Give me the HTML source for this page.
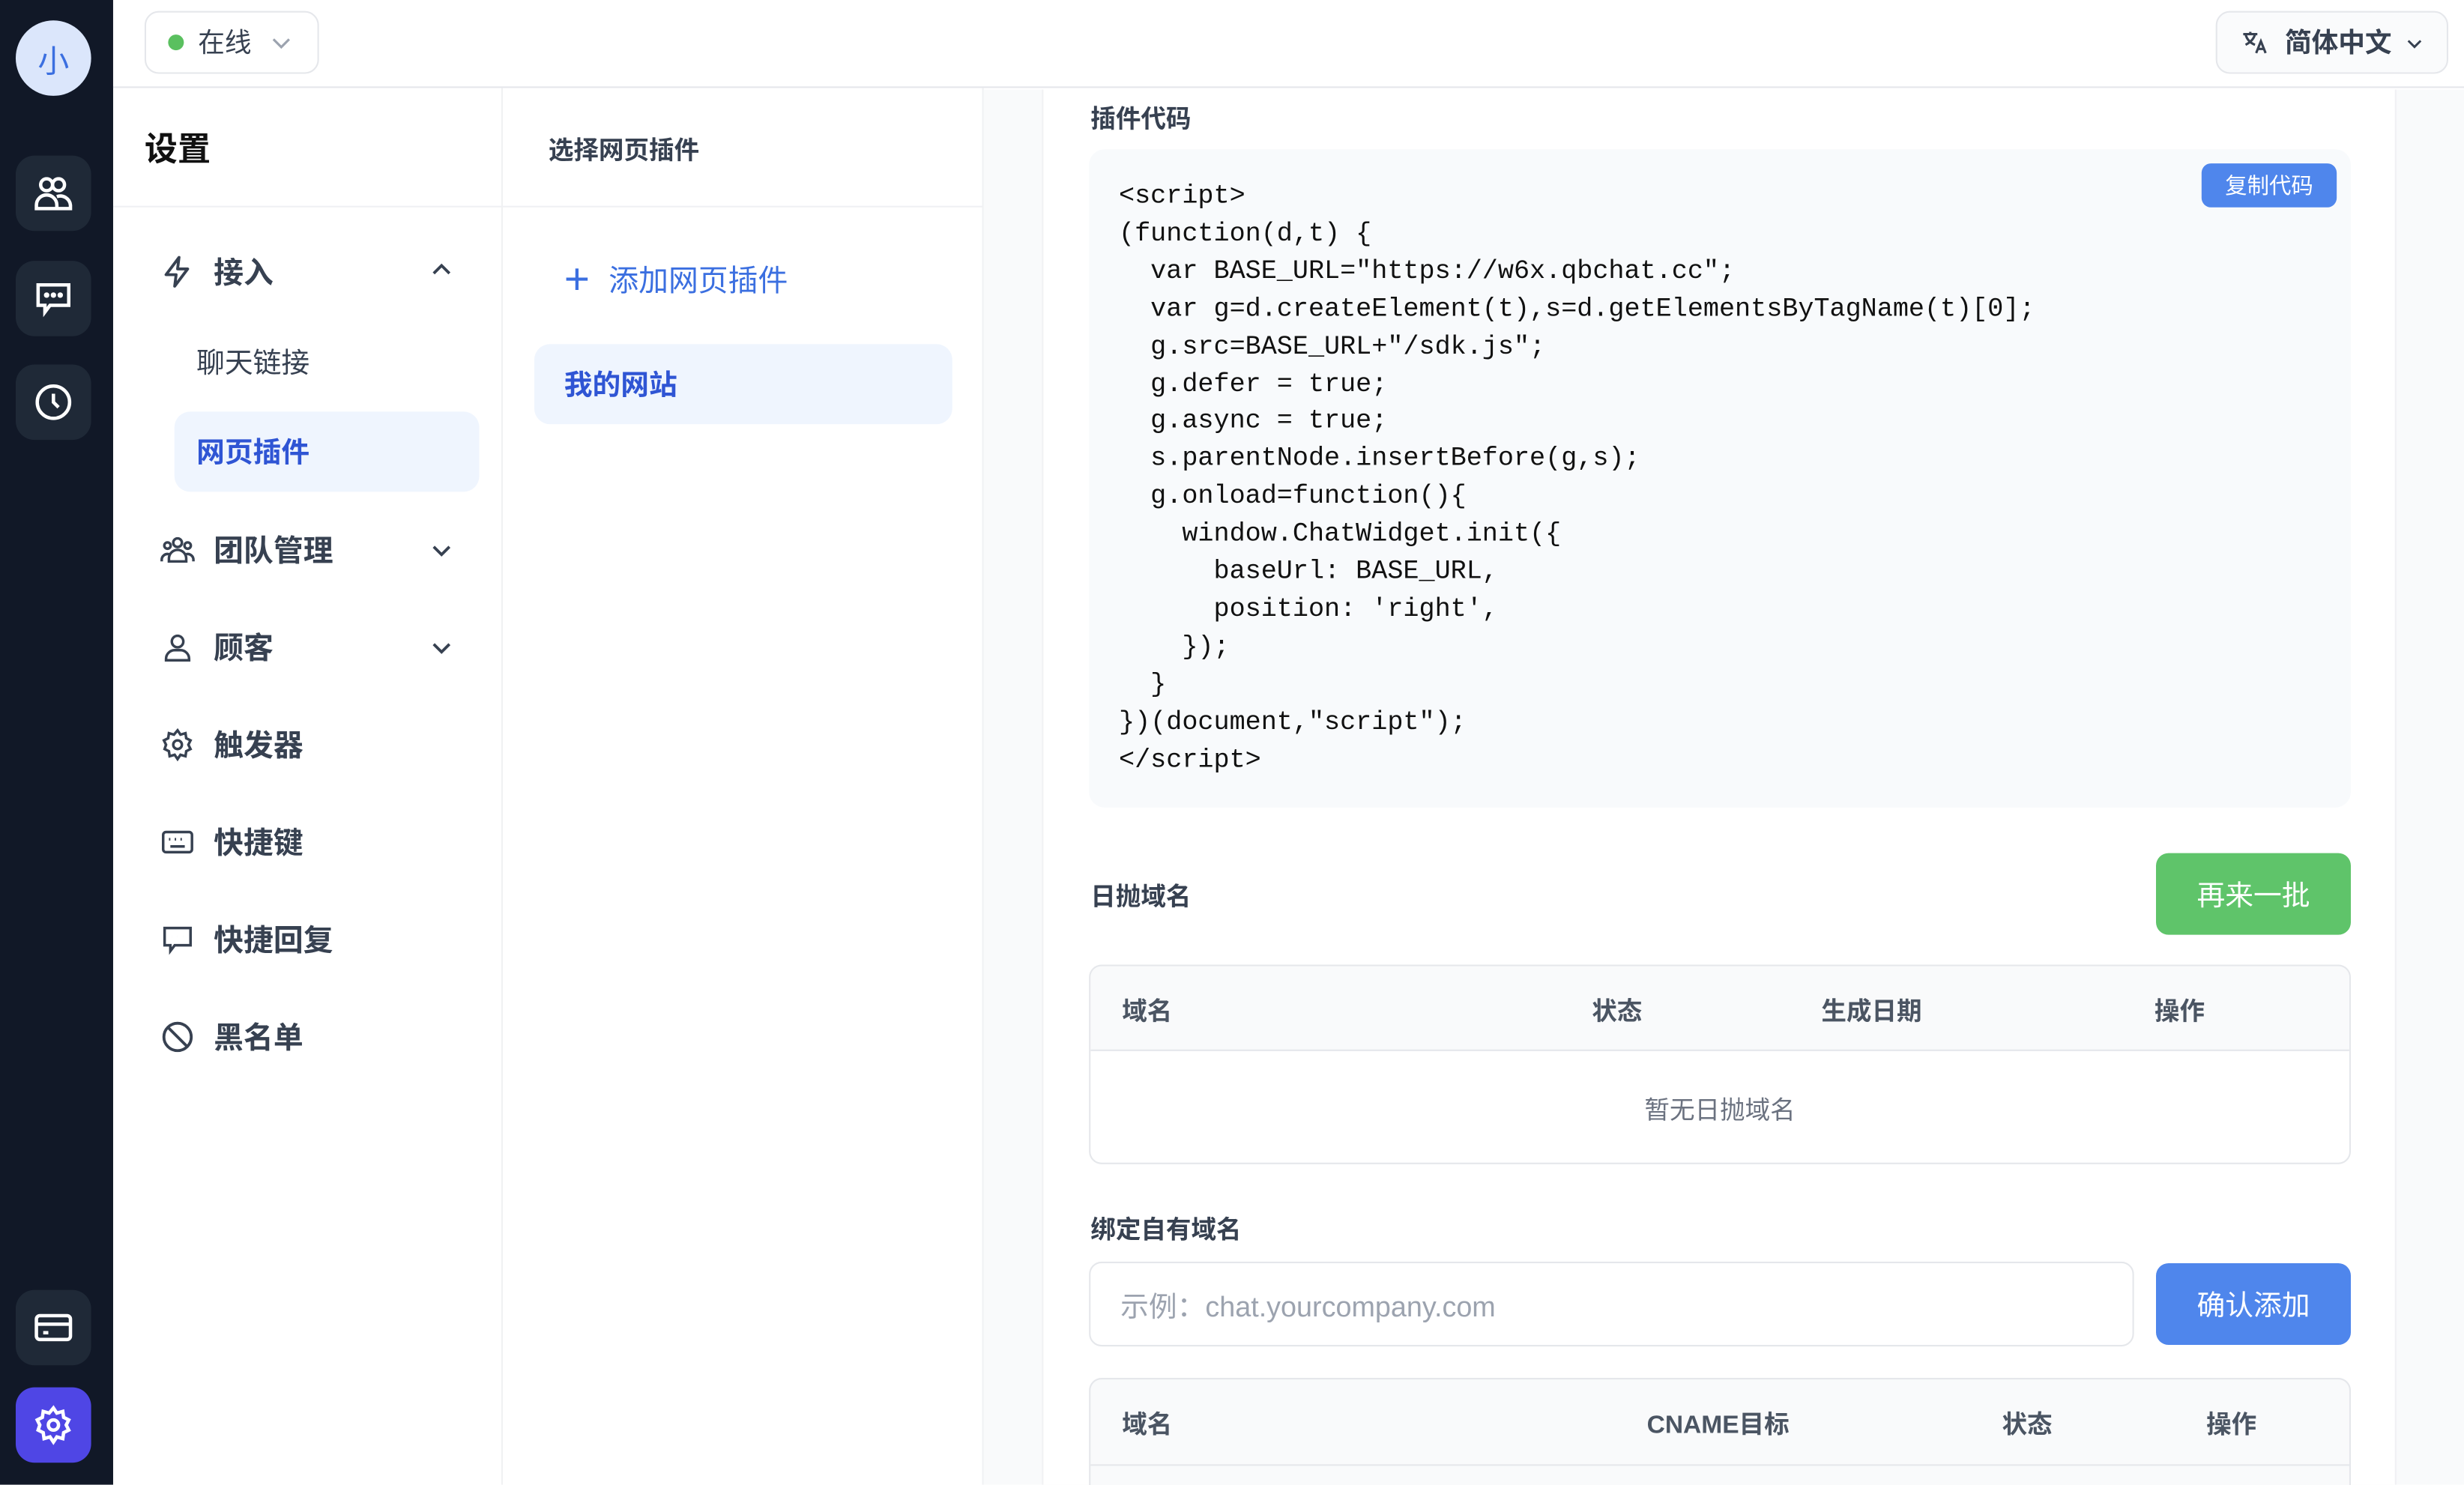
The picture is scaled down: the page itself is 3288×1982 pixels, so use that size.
<!DOCTYPE html>
<html><head><meta charset="utf-8"><style>
*{box-sizing:border-box;margin:0;padding:0}
html,body{width:3288px;height:1982px;overflow:hidden;background:#fff}
#r{width:1568px;height:945px;transform:scale(2.096939);transform-origin:0 0;position:relative;font-family:"Liberation Sans","Noto Sans CJK SC",sans-serif;color:#1f2937}
.a{position:absolute}
.side{left:0;top:0;width:72px;height:945px;background:#111827}
.ib{position:absolute;left:10px;width:48px;height:48px;border-radius:12px;background:#1f2937;display:flex;align-items:center;justify-content:center}
.nav{position:absolute;left:102px;display:flex;align-items:center;font-size:19px;font-weight:bold;color:#374151}
.nav svg{margin-right:12px}
.chev{position:absolute;left:273px}
.code{font-family:"Liberation Mono","DejaVu Sans Mono",monospace;font-size:16.75px;line-height:23.9px;color:#111;white-space:pre}
.th{font-size:16px;font-weight:bold;color:#4b5563}
</style></head><body><div id="r">
<div class="a side">
 <div class="a" style="left:10px;top:13px;width:48px;height:48px;border-radius:50%;background:#dbe6fb;color:#3b6fe0;font-size:20px;display:flex;align-items:center;justify-content:center">小</div>
 <div class="ib" style="top:99px"><svg width="26" height="26" viewBox="0 0 24 24" fill="none" stroke="#fff" stroke-width="2"><circle cx="8" cy="7" r="3.5"/><circle cx="15" cy="7" r="3.5"/><path d="M2 21v-2a6 6 0 0 1 12 0v2zM14 14a6 6 0 0 1 8 5v2h-8"/></svg></div>
 <div class="ib" style="top:166px"><svg width="26" height="26" viewBox="0 0 24 24" fill="none" stroke="#fff" stroke-width="2"><path d="M3 4h18v12H10l-3 4v-4H3z"/><circle cx="8" cy="10" r=".6" fill="#fff"/><circle cx="12" cy="10" r=".6" fill="#fff"/><circle cx="16" cy="10" r=".6" fill="#fff"/></svg></div>
 <div class="ib" style="top:232px"><svg width="26" height="26" viewBox="0 0 24 24" fill="none" stroke="#fff" stroke-width="2"><circle cx="12" cy="12" r="9.5"/><path d="M12 7v5l3 3"/></svg></div>
 <div class="ib" style="top:821px"><svg width="26" height="26" viewBox="0 0 24 24" fill="none" stroke="#fff" stroke-width="2"><rect x="2" y="5" width="20" height="14" rx="2"/><path d="M2 10h20M6 15h3"/></svg></div>
 <div class="ib" style="top:883px;background:#4f46e5"><svg width="26" height="26" viewBox="0 0 24 24" fill="none" stroke="#fff" stroke-width="2"><circle cx="12" cy="12" r="3"/><path d="M12 2l2 3 3.5-1 .5 3.5 3 1.5-1.5 3 1.5 3-3 1.5-.5 3.5-3.5-1-2 3-2-3-3.5 1-.5-3.5-3-1.5L4 12 2.5 9l3-1.5L6 4l3.5 1z"/></svg></div>
</div>
<div class="a" style="left:72px;top:0;width:1496px;height:56px;border-bottom:1px solid #e5e7eb;background:#fff"></div>
<div class="a" style="left:92px;top:7px;width:111px;height:40px;border:1px solid #e5e7eb;border-radius:9px;display:flex;align-items:center;padding-left:14px;font-size:17px;color:#374151"><span style="width:10px;height:10px;border-radius:50%;background:#5ac05f;margin-right:9px"></span><span style="margin-top:-3px">在线</span><svg style="margin-left:12px" width="14" height="14" viewBox="0 0 14 14" fill="none" stroke="#9ca3af" stroke-width="1.5"><path d="M2 5l5 5 5-5"/></svg></div>
<div class="a" style="left:1410px;top:7px;width:148px;height:40px;border:1px solid #e5e7eb;border-radius:9px;background:#fafbfc;display:flex;align-items:center;padding-left:15px;font-size:17px;color:#374151;font-weight:bold"><svg width="18" height="18" viewBox="0 0 24 24" fill="none" stroke="#374151" stroke-width="2"><path d="M2 5h12M8 3v2M4 5c1 5 5 8 8 9M12 5c-1 4-4 7-8 9M13 21l4-10 4 10M14.5 17.5h5"/></svg><span style="margin-left:10px;margin-top:-3px">简体中文</span><svg style="margin-left:9px" width="11" height="11" viewBox="0 0 14 14" fill="none" stroke="#374151" stroke-width="1.8"><path d="M2 5l5 5 5-5"/></svg></div>
<div class="a" style="left:319px;top:56px;width:1px;height:889px;background:#f0f1f3"></div>
<div class="a" style="left:72px;top:131px;width:553px;height:1px;background:#f0f1f3"></div>
<div class="a" style="left:92px;top:79px;font-size:21px;font-weight:bold;color:#111">设置</div>
<div class="nav" style="top:159px"><svg width="22" height="22" viewBox="0 0 24 24" fill="none" stroke="#374151" stroke-width="2" stroke-linejoin="round"><path d="M13 2L4 14h7l-1 8 9-12h-7z"/></svg>接入</div>
<div class="chev" style="top:164px"><svg width="16" height="16" viewBox="0 0 16 16" fill="none" stroke="#374151" stroke-width="1.8"><path d="M3 10l5-5 5 5"/></svg></div>
<div class="a" style="left:125px;top:217px;font-size:18px;color:#374151">聊天链接</div>
<div class="a" style="left:111px;top:262px;width:194px;height:51px;border-radius:10px;background:#eff5fe;padding:12px 14px;font-size:18px;font-weight:bold;color:#2f55d4">网页插件</div>
<div class="nav" style="top:336px"><svg width="22" height="22" viewBox="0 0 24 24" fill="none" stroke="#374151" stroke-width="1.8"><circle cx="12" cy="7" r="3"/><circle cx="5" cy="9" r="2.2"/><circle cx="19" cy="9" r="2.2"/><path d="M6 20v-2a6 6 0 0 1 12 0v2zM1 20v-1a4 4 0 0 1 5-4M23 20v-1a4 4 0 0 0-5-4"/></svg>团队管理</div>
<div class="chev" style="top:342px"><svg width="16" height="16" viewBox="0 0 16 16" fill="none" stroke="#374151" stroke-width="1.8"><path d="M3 6l5 5 5-5"/></svg></div>
<div class="nav" style="top:398px"><svg width="22" height="22" viewBox="0 0 24 24" fill="none" stroke="#374151" stroke-width="1.8"><circle cx="12" cy="8" r="4"/><path d="M4 21v-1a6 6 0 0 1 6-6h4a6 6 0 0 1 6 6v1z"/></svg>顾客</div>
<div class="chev" style="top:404px"><svg width="16" height="16" viewBox="0 0 16 16" fill="none" stroke="#374151" stroke-width="1.8"><path d="M3 6l5 5 5-5"/></svg></div>
<div class="nav" style="top:460px"><svg width="22" height="22" viewBox="0 0 24 24" fill="none" stroke="#374151" stroke-width="1.8"><circle cx="12" cy="12" r="3"/><path d="M12 2l2 3 3.5-1 .5 3.5 3 1.5-1.5 3 1.5 3-3 1.5-.5 3.5-3.5-1-2 3-2-3-3.5 1-.5-3.5-3-1.5L4 12 2.5 9l3-1.5L6 4l3.5 1z"/></svg>触发器</div>
<div class="nav" style="top:522px"><svg width="22" height="22" viewBox="0 0 24 24" fill="none" stroke="#374151" stroke-width="1.8"><rect x="2" y="5" width="20" height="14" rx="2"/><path d="M6 10h1M10 10h1M14 10h1M18 10h0M7 15h10"/></svg>快捷键</div>
<div class="nav" style="top:584px"><svg width="22" height="22" viewBox="0 0 24 24" fill="none" stroke="#374151" stroke-width="1.8"><path d="M3 4h18v12H10l-3 4v-4H3z"/><path d="M8 10h.01M12 10h.01M16 10h.01"/></svg>快捷回复</div>
<div class="nav" style="top:646px"><svg width="22" height="22" viewBox="0 0 24 24" fill="none" stroke="#374151" stroke-width="2"><circle cx="12" cy="12" r="9.5"/><path d="M5.3 5.3l13.4 13.4"/></svg>黑名单</div>
<div class="a" style="left:625px;top:56px;width:1px;height:889px;background:#f0f1f3"></div>
<div class="a" style="left:349px;top:82px;font-size:16px;font-weight:bold;color:#374151">选择网页插件</div>
<div class="a" style="left:359px;top:164px;font-size:19px;color:#3b6fe0;display:flex;align-items:center"><span style="font-size:28px;font-weight:300;margin-right:12px;line-height:24px">+</span>添加网页插件</div>
<div class="a" style="left:340px;top:219px;width:266px;height:51px;border-radius:10px;background:#eff5fe;padding:12px 19px;font-size:18px;font-weight:bold;color:#2f55d4">我的网站</div>
<div class="a" style="left:626px;top:57px;width:942px;height:888px;background:#f9fafb"></div>
<div class="a" style="left:663px;top:57px;width:862px;height:888px;background:#fff;border-left:1px solid #f0f1f3;border-right:1px solid #f0f1f3"></div>
<div class="a" style="left:694px;top:62px;font-size:16px;font-weight:bold;color:#374151">插件代码</div>
<div class="a" style="left:693px;top:95px;width:803px;height:419px;background:#f8fafc;border-radius:10px"></div>
<div class="a" style="left:1401px;top:104px;width:86px;height:28px;background:#4f86ec;border-radius:6px;color:#fff;font-size:14px;display:flex;align-items:center;justify-content:center">复制代码</div>
<div class="a code" style="left:712px;top:114px">&lt;script&gt;
(function(d,t) {
  var BASE_URL="https://w6x.qbchat.cc";
  var g=d.createElement(t),s=d.getElementsByTagName(t)[0];
  g.src=BASE_URL+"/sdk.js";
  g.defer = true;
  g.async = true;
  s.parentNode.insertBefore(g,s);
  g.onload=function(){
    window.ChatWidget.init({
      baseUrl: BASE_URL,
      position: 'right',
    });
  }
})(document,"script");
&lt;/script&gt;</div>
<div class="a" style="left:694px;top:557px;font-size:16px;font-weight:bold;color:#374151">日抛域名</div>
<div class="a" style="left:1372px;top:543px;width:124px;height:52px;background:#5fc46a;border-radius:8px;color:#fff;font-size:18px;display:flex;align-items:center;justify-content:center">再来一批</div>
<div class="a" style="left:693px;top:614px;width:803px;height:127px;border:1px solid #e5e7eb;border-radius:8px;overflow:hidden">
 <div style="height:54px;background:#f9fafb;border-bottom:1px solid #e5e7eb;position:relative">
  <span class="a th" style="left:20px;top:15px">域名</span><span class="a th" style="left:319px;top:15px">状态</span><span class="a th" style="left:465px;top:15px">生成日期</span><span class="a th" style="left:677px;top:15px">操作</span></div>
 <div style="text-align:center;padding-top:24px;font-size:16px;color:#6b7280">暂无日抛域名</div>
</div>
<div class="a" style="left:694px;top:769px;font-size:16px;font-weight:bold;color:#374151">绑定自有域名</div>
<div class="a" style="left:693px;top:803px;width:665px;height:54px;border:1px solid #e5e7eb;border-radius:8px;padding:14px 19px;font-size:18px;color:#9ca3af">示例：chat.yourcompany.com</div>
<div class="a" style="left:1372px;top:804px;width:124px;height:52px;background:#4f86ec;border-radius:8px;color:#fff;font-size:18px;display:flex;align-items:center;justify-content:center">确认添加</div>
<div class="a" style="left:693px;top:877px;width:803px;height:80px;border:1px solid #e5e7eb;border-radius:8px;background:#f9fafb">
 <span class="a th" style="left:20px;top:15px">域名</span><span class="a th" style="left:354px;top:15px">CNAME目标</span><span class="a th" style="left:580px;top:15px">状态</span><span class="a th" style="left:710px;top:15px">操作</span>
 <div class="a" style="left:0;top:54px;width:801px;height:1px;background:#e5e7eb"></div></div>
</div></body></html>
